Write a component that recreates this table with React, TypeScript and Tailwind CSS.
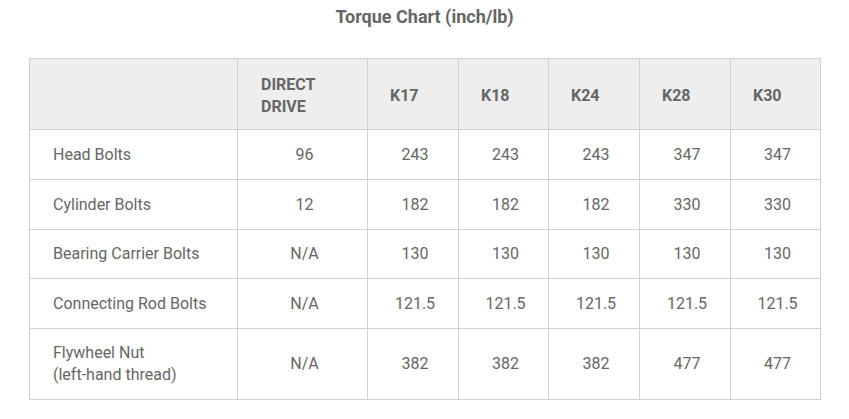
import React from 'react';

type Row = {
  label: React.ReactNode;
  values: string[];
  height: string;
};

const columns = ['K17', 'K18', 'K24', 'K28', 'K30'];

const rows: Row[] = [
  { label: 'Head Bolts', values: ['96', '243', '243', '243', '347', '347'], height: 'h-[50px]' },
  { label: 'Cylinder Bolts', values: ['12', '182', '182', '182', '330', '330'], height: 'h-[50px]' },
  { label: 'Bearing Carrier Bolts', values: ['N/A', '130', '130', '130', '130', '130'], height: 'h-[49px]' },
  { label: 'Connecting Rod Bolts', values: ['N/A', '121.5', '121.5', '121.5', '121.5', '121.5'], height: 'h-[50px]' },
  {
    label: (
      <>
        Flywheel Nut
        <br />
        (left-hand thread)
      </>
    ),
    values: ['N/A', '382', '382', '382', '477', '477'],
    height: 'h-[71px]',
  },
];

export default function App() {
  return (
    <div className="w-[849px] h-[419px] bg-white text-[#666666] font-['Roboto',sans-serif]">
      <h2 className="pt-[5px] text-center text-[18px] leading-[24px] font-bold text-[#666666]">
        Torque Chart (inch/lb)
      </h2>

      <table className="mt-[29px] ml-[29px] w-[792px] table-fixed border-collapse text-[16px] leading-[22px]">
        <colgroup>
          <col className="w-[208px]" />
          <col className="w-[130px]" />
          <col className="w-[91px]" />
          <col className="w-[90px]" />
          <col className="w-[91px]" />
          <col className="w-[91px]" />
          <col className="w-[90px]" />
        </colgroup>
        <thead>
          <tr className="h-[71px] bg-[#eeeeee]">
            <th className="border border-[#d0d0d0]" />
            <th className="border border-[#d0d0d0] pt-[3px] pl-[23px] text-left font-bold">
              DIRECT
              <br />
              DRIVE
            </th>
            {columns.map((c) => (
              <th key={c} className="border border-[#d0d0d0] pt-[3px] pl-[22px] text-left font-bold">
                {c}
              </th>
            ))}
          </tr>
        </thead>
        <tbody>
          {rows.map((row, i) => (
            <tr key={i} className={row.height}>
              <td className="border border-[#d0d0d0] pl-[23px] text-left">{row.label}</td>
              {row.values.map((v, j) => (
                <td key={j} className="border border-[#d0d0d0] pl-[4px] text-center">
                  {v}
                </td>
              ))}
            </tr>
          ))}
        </tbody>
      </table>
    </div>
  );
}
